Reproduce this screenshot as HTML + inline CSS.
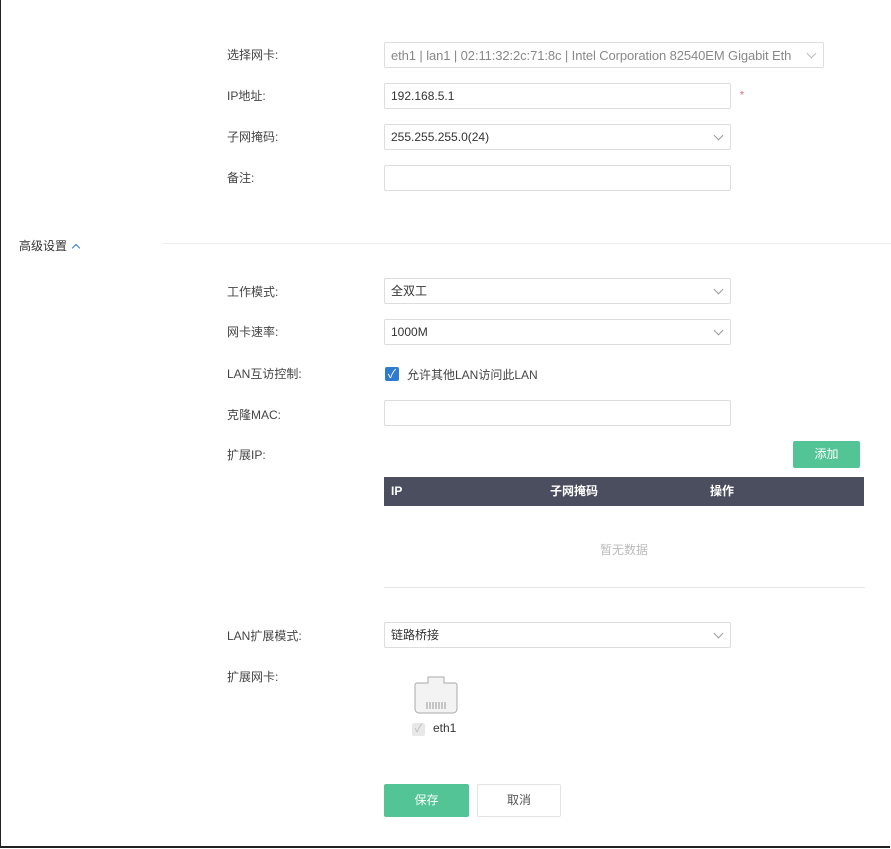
<!DOCTYPE html><html><head><meta charset="utf-8"><style>
body{margin:0;width:891px;height:849px;background:#fff;font-family:"Liberation Sans","Noto Sans CJK SC",sans-serif;font-size:12px;color:#333;position:relative;overflow:hidden}
.frame{position:absolute;left:0;top:0;width:889px;height:846px;border-left:1px solid #222;border-bottom:2px solid #222}
.a{position:absolute}
.lab{position:absolute;left:227px;color:#444;font-size:12px;line-height:16px}
.inp{position:absolute;left:384px;width:347px;height:25px;border:1px solid #ddd;border-radius:2px;line-height:25px;padding-left:6px;box-sizing:border-box;font-size:12px;color:#333}
.chev{position:absolute;right:8px;top:7px;width:6px;height:6px;border-right:1px solid #999;border-bottom:1px solid #999;transform:rotate(45deg)}
</style></head><body><div class="frame"></div>
<div class="lab" style="top:47px">选择网卡:</div>
<div class="inp" style="top:42px;width:440px;color:#888;height:26px;line-height:26px;font-size:13px;letter-spacing:-0.1px">eth1 | lan1 | 02:11:32:2c:71:8c | Intel Corporation 82540EM Gigabit Eth<span class="chev" style="border-color:#bbb"></span></div>
<div class="lab" style="top:88px">IP地址:</div>
<div class="inp" style="top:83px;height:26px">192.168.5.1</div>
<div class="a" style="left:740px;top:90px;color:#e55;font-size:10px">*</div>
<div class="lab" style="top:129px">子网掩码:</div>
<div class="inp" style="top:124px;height:26px">255.255.255.0(24)<span class="chev"></span></div>
<div class="lab" style="top:170px">备注:</div>
<div class="inp" style="top:165px;height:26px"></div>
<div class="a" style="left:19px;top:237px;font-size:12px;color:#333">高级设置 <span style="display:inline-block;width:5px;height:5px;border-left:1px solid #2f7bd0;border-top:1px solid #2f7bd0;transform:rotate(45deg);margin-left:3px;position:relative;top:1px"></span></div>
<div class="a" style="left:162px;top:243px;width:729px;height:1px;background:#eee"></div>
<div class="lab" style="top:284px">工作模式:</div>
<div class="inp" style="top:278px;height:26px">全双工<span class="chev"></span></div>
<div class="lab" style="top:324px">网卡速率:</div>
<div class="inp" style="top:319px;height:26px">1000M<span class="chev"></span></div>
<div class="lab" style="top:366px">LAN互访控制:</div>
<div class="a" style="left:385px;top:367px;width:14px;height:14px;background:#2f7bd0;border-radius:2px;color:#fff;font-size:12px;line-height:14px;text-align:center">✓</div>
<div class="a" style="left:407px;top:366px;color:#444">允许其他LAN访问此LAN</div>
<div class="lab" style="top:407px">克隆MAC:</div>
<div class="inp" style="top:400px;height:26px"></div>
<div class="lab" style="top:447px">扩展IP:</div>
<div class="a" style="left:793px;top:441px;width:67px;height:27px;background:#52c495;border-radius:2px;color:#fff;text-align:center;line-height:27px">添加</div>
<div class="a" style="left:384px;top:477px;width:480px;height:29px;background:#4a4e5e;color:#fff;line-height:29px;font-weight:bold">
<span class="a" style="left:7px">IP</span><span class="a" style="left:166px">子网掩码</span><span class="a" style="left:326px">操作</span></div>
<div class="a" style="left:600px;top:541px;color:#bbb">暂无数据</div>
<div class="a" style="left:384px;top:587px;width:481px;height:1px;background:#e5e5e5"></div>
<div class="lab" style="top:628px">LAN扩展模式:</div>
<div class="inp" style="top:622px;height:26px">链路桥接<span class="chev"></span></div>
<div class="lab" style="top:669px">扩展网卡:</div>
<svg class="a" style="left:414px;top:676px" width="44" height="38" viewBox="0 0 44 38"><path d="M14 1h16v6h11a2 2 0 0 1 2 2v24a4 4 0 0 1-4 4H5a4 4 0 0 1-4-4V9a2 2 0 0 1 2-2h11z" fill="#f3f3f3" stroke="#aaa"/><g stroke="#999"><line x1="13" y1="26" x2="13" y2="33"/><line x1="16" y1="26" x2="16" y2="33"/><line x1="19" y1="26" x2="19" y2="33"/><line x1="22" y1="26" x2="22" y2="33"/><line x1="25" y1="26" x2="25" y2="33"/><line x1="28" y1="26" x2="28" y2="33"/><line x1="31" y1="26" x2="31" y2="33"/></g></svg>
<div class="a" style="left:412px;top:723px;width:13px;height:13px;background:#e8e8e8;border-radius:2px;color:#bbb;font-size:11px;line-height:13px;text-align:center">✓</div>
<div class="a" style="left:433px;top:721px;color:#333">eth1</div>
<div class="a" style="left:384px;top:784px;width:85px;height:33px;background:#52c495;border-radius:2px;color:#fff;text-align:center;line-height:33px">保存</div>
<div class="a" style="left:477px;top:784px;width:84px;height:33px;border:1px solid #e3e3e3;box-sizing:border-box;border-radius:2px;color:#555;text-align:center;line-height:31px">取消</div>
</body></html>
